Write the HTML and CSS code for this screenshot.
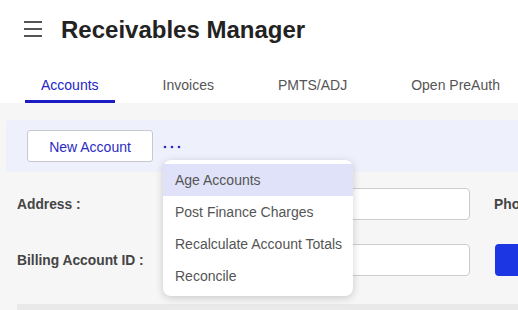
FILE: index.html
```html
<!DOCTYPE html>
<html>
  <head>
    <title>Receivables Manager</title>
    <link rel="stylesheet" href="styles.css">
  </head>
  <body>
    <header class="topbar">
      <svg class="menu-icon" width="18" height="16" viewBox="0 0 18 16">
        <rect x="0" y="1" width="18" height="2" fill="#555"/>
        <rect x="0" y="8" width="18" height="2" fill="#555"/>
        <rect x="0" y="15" width="18" height="2" fill="#555"/>
      </svg>
      <h1>Receivables Manager</h1>
    </header>
    <nav class="tabs">
      <a class="tab active">Accounts</a>
      <a class="tab">Invoices</a>
      <a class="tab">PMTS/ADJ</a>
      <a class="tab">Open PreAuth</a>
    </nav>
    <main class="content">
      <div class="toolbar">
        <button class="btn-outline">New Account</button>
        <span class="more">
          <svg width="18" height="6" viewBox="0 0 18 6">
            <circle cx="2" cy="3" r="1.3" fill="#2b2bc4"/>
            <circle cx="9" cy="3" r="1.3" fill="#2b2bc4"/>
            <circle cx="16" cy="3" r="1.3" fill="#2b2bc4"/>
          </svg>
        </span>
        <ul class="dropdown">
          <li class="selected">Age Accounts</li>
          <li>Post Finance Charges</li>
          <li>Recalculate Account Totals</li>
          <li>Reconcile</li>
        </ul>
      </div>
      <section class="fields">
        <label>Address :</label>
        <div class="input"></div>
        <label>Phone :</label>
        <label>Billing Account ID :</label>
        <div class="input"></div>
        <div class="btn-solid"></div>
      </section>
      <div class="panel"></div>
    </main>
  </body>
</html>
```
FILE: styles.css
```css
/* Page basics */
body {
  font-family: "Liberation Sans", Arial, sans-serif;
  font-size: 14px;
  margin: 0;
  padding: 0;
  width: 518px;
  height: 310px;
  overflow: hidden;
  background: #fff;
}
.topbar {
  display: flex;
  align-items: center;
  height: 60px;
  padding-left: 24px;
}
.menu-icon {
  margin-top: -5px;
  overflow: visible;
}
h1 {
  font-size: 24px;
  font-weight: bold;
  color: #222;
  margin: 0 0 0 19px;
  line-height: 28px;
}
.tabs {
  display: flex;
  gap: 32px;
  padding-left: 25px;
  white-space: nowrap;
}
.tab {
  padding: 17px 16px 7px;
  line-height: 16px;
  color: #555;
  border-bottom: 3px solid transparent;
}
.tab.active {
  color: #2424c4;
  border-bottom-color: #1c1cc2;
}
.content {
  background: #f6f6f7;
  padding-top: 17px;
  height: 190px;
}
.toolbar {
  position: relative;
  display: flex;
  align-items: center;
  margin-left: 6px;
  padding: 10px 21px;
  background: #eef0fb;
  border-radius: 4px 0 0 4px;
}
.btn-outline {
  width: 126px;
  height: 32px;
  background: #fff;
  border: 1px solid #c8c8d0;
  border-radius: 3px;
  color: #2b2bc4;
  font-family: inherit;
  font-size: 14px;
  padding: 0;
  padding-top: 2px;
}
.more {
  display: flex;
  margin-left: 10px;
  margin-top: 2px;
}
.dropdown {
  position: absolute;
  left: 157px;
  top: 40px;
  width: 190px;
  margin: 0;
  padding: 4px 0;
  list-style: none;
  background: #fff;
  border-radius: 8px;
  box-shadow: 0 2px 8px rgba(0, 0, 0, 0.18);
  z-index: 2;
}
.dropdown li {
  height: 32px;
  line-height: 32px;
  padding-left: 12px;
  color: #555;
  white-space: nowrap;
}
.dropdown li.selected {
  background: #dfe2f8;
}
.fields {
  display: grid;
  grid-template-columns: 139px 290px 100px;
  column-gap: 24px;
  row-gap: 24px;
  align-items: center;
  padding-left: 17px;
  margin-top: 16px;
}
.fields label {
  font-size: 13.8px;
  font-weight: bold;
  color: #444;
  white-space: nowrap;
}
.input {
  height: 30px;
  background: #fff;
  border: 1px solid #ccc;
  border-radius: 4px;
}
.btn-solid {
  height: 32px;
  margin-left: 1px;
  background: #1d36e3;
  border-radius: 4px;
}
.panel {
  margin: 28px 0 0 17px;
  height: 20px;
  background: #e9e9ea;
}
```
